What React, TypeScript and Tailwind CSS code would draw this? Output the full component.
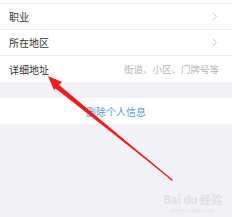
import React from "react";

const font = { fontFamily: '"Noto Sans CJK SC", "Noto Sans", sans-serif' };

const Chevron = () => (
  <svg width="6" height="9" viewBox="0 0 6 9" fill="none">
    <path d="M1 1l3.5 3.5L1 8" stroke="#c8c8cc" strokeWidth="1" />
  </svg>
);

const Row = ({ label, right, last }: { label: string; right: React.ReactNode; last?: boolean }) => (
  <div className={`flex h-[26px] items-center justify-between pl-[9px] pr-[14px] ${last ? "" : "border-b border-[#ececf0]"}`}>
    <span className="text-[10px] text-[#333]">{label}</span>
    {right}
  </div>
);

export default function App() {
  return (
    <div className="relative h-[217px] w-[232px] overflow-hidden bg-[#f3f3f7]" style={font}>
      {/* List */}
      <div className="bg-white pt-[3px]">
        <div className="border-t border-[#ececf0]" />
        <Row label="职业" right={<Chevron />} />
        <Row label="所在地区" right={<Chevron />} />
        <Row
          label="详细地址"
          right={<span className="-mr-[1px] text-[9.5px] text-[#b4b4b8]">街道、小区、门牌号等</span>}
          last
        />
      </div>

      <div className="h-[16px]" />

      {/* Delete */}
      <div className="flex h-[26px] items-center justify-center bg-white">
        <span className="text-[10px] text-[#5a9ad8]">删除个人信息</span>
      </div>

      {/* Watermark */}
      <div className="absolute bottom-[4px] right-[10px] flex flex-col items-center text-[#e0e0e4]">
        <span className="h-[12px] text-[11px] font-bold leading-[12px]">Bai du 经验</span>
        <span className="mt-[2px] h-[6px] text-[5px] leading-[6px]">jingyan.baidu.com</span>
      </div>

      {/* Red annotation arrow */}
      <svg className="pointer-events-none absolute left-0 top-0" width="232" height="217" viewBox="0 0 232 217">
        <path d="M172 180 L58 84 L55 88 Z" fill="#ee1c1c" />
        <path d="M172 180 L58 86" stroke="#ee1c1c" strokeWidth="1.4" strokeLinecap="round" />
        <path d="M48 76 L62 82 L54 90 Z" fill="#ee1c1c" />
      </svg>
    </div>
  );
}
